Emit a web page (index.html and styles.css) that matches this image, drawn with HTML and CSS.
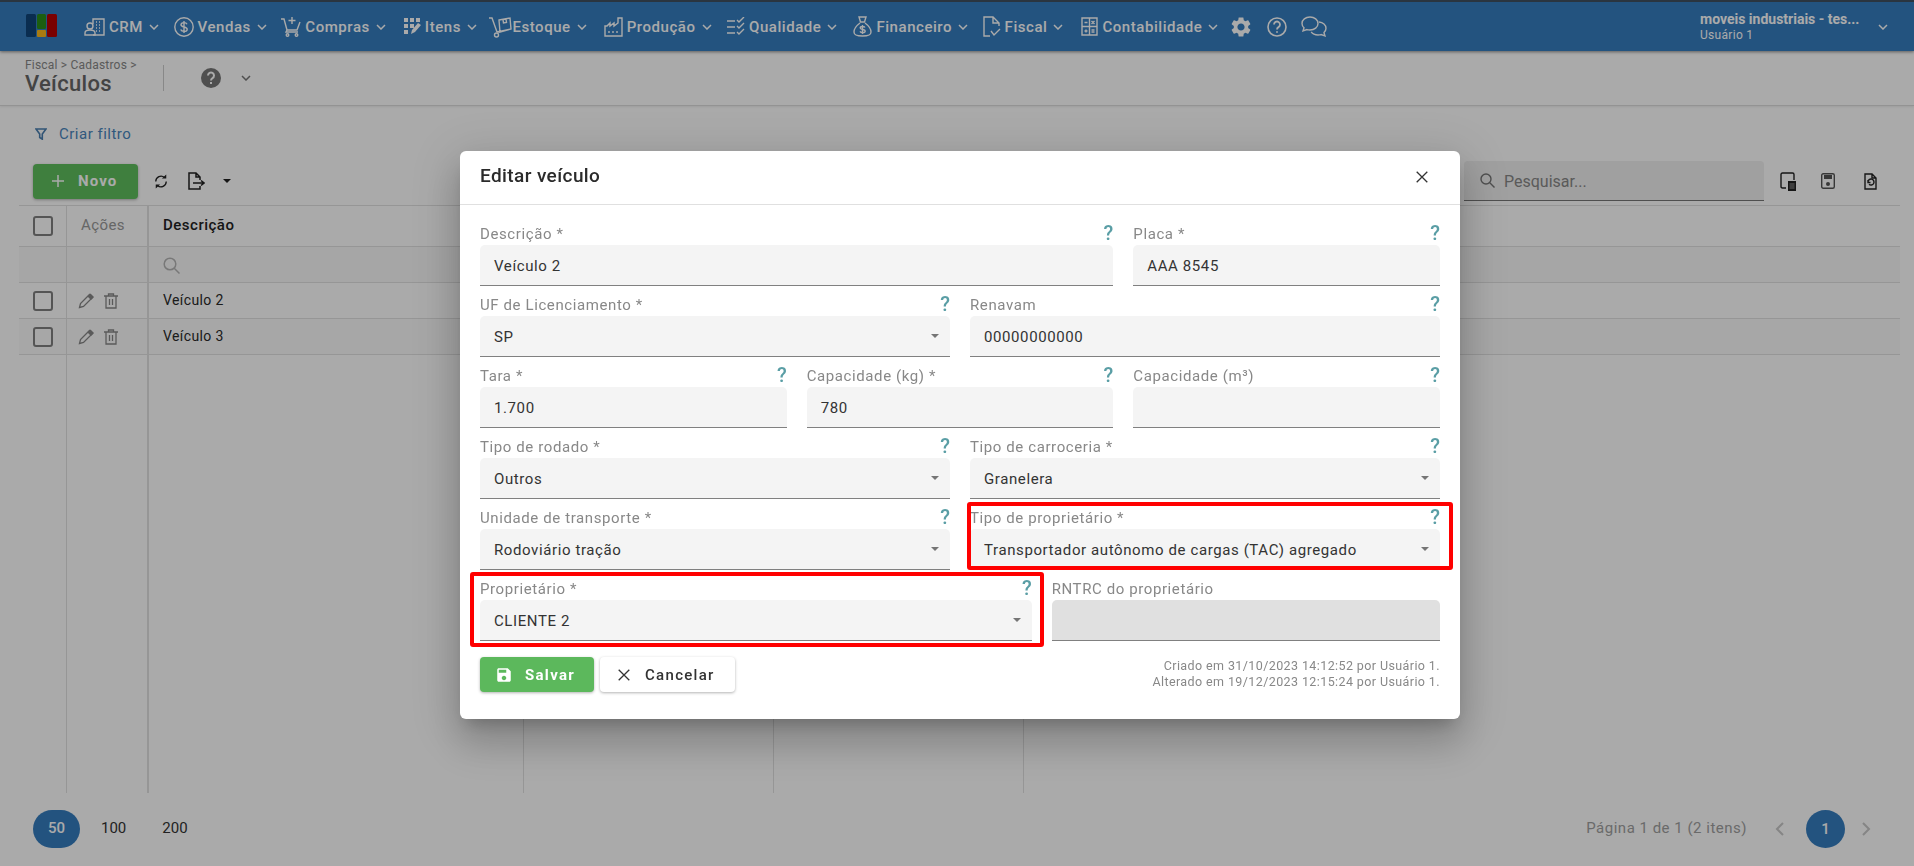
FILE: index.html
```html
<!DOCTYPE html>
<html lang="pt-BR">
<head>
<meta charset="utf-8">
<title>Veículos</title>
<link rel="stylesheet" href="styles.css">
</head>
<body>
<div class="page">
  <header class="topbar">
    <svg class="logo" width="31" height="23" viewBox="0 0 31 23"><rect width="10" height="23" rx="1.5" fill="#104478"/><rect x="11" width="9" height="15" rx="1.5" fill="#2a8d18"/><rect x="11" y="16" width="9" height="7" rx="1" fill="#fcb718"/><rect x="21" width="10" height="23" rx="1.5" fill="#b80000"/></svg>
    <nav class="nav">
      <a class="nav-item"><svg width="21" height="20" viewBox="0 0 21 20" class="ico"><path d="M9 7V2h11v16H9M12 5h1M15 5h1M12 8h1M15 8h1M12 11h1M15 11h1M12 14h1M15 14h1"/><circle cx="6" cy="9" r="3"/><path d="M1 18v-2c0-2 2-3 5-3s5 1 5 3v2z"/></svg><span>CRM</span><svg class="chev" width="10" height="6" viewBox="0 0 10 6"><path d="M1 1l4 4 4-4"/></svg></a>
      <a class="nav-item"><svg width="20" height="20" viewBox="0 0 20 20" class="ico"><circle cx="10" cy="10" r="9.2"/><path d="M13 7.200C12.500 6 11.300 5.600 10 5.600c-1.700 0-3 .8-3 2.200 0 3 6.200 1.400 6.200 4.400 0 1.400-1.400 2.200-3.200 2.200-1.500 0-2.800-.6-3.300-1.900M10 4v12"/></svg><span>Vendas</span><svg class="chev" width="10" height="6" viewBox="0 0 10 6"><path d="M1 1l4 4 4-4"/></svg></a>
      <a class="nav-item nav-compras"><svg width="20" height="21" viewBox="0 0 20 21" class="ico"><path d="M0 3h3l3 11h10l3-8M6 14l-1 2h12M11 1v7M7.500 4.500h7"/><circle cx="6.500" cy="19" r="1.300"/><circle cx="15.500" cy="19" r="1.300"/></svg><span>Compras</span><svg class="chev" width="10" height="6" viewBox="0 0 10 6"><path d="M1 1l4 4 4-4"/></svg></a>
      <a class="nav-item nav-itens"><svg width="17" height="18" viewBox="0 0 17 18" class="ico-fill"><path d="M0 0h4v4H0zM6 0h4v4H6zM12 0h4v4h-4zM0 6h4v4H0zM6 6h4v4H6zM0 12h4v4H0zM7 16l1-4 6-7 3 2-6 7z"/></svg><span>Itens</span><svg class="chev" width="10" height="6" viewBox="0 0 10 6"><path d="M1 1l4 4 4-4"/></svg></a>
      <a class="nav-item nav-estoque"><svg width="23" height="22" viewBox="0 0 23 22" class="ico"><path d="M0 2h3l5 14M10 4l11-2 1 11-11 3zM14 3.500l.5 3.500 3-.5-.5-3.500M8 16l14-3"/><circle cx="7.500" cy="19" r="2"/></svg><span>Estoque</span><svg class="chev" width="10" height="6" viewBox="0 0 10 6"><path d="M1 1l4 4 4-4"/></svg></a>
      <a class="nav-item nav-producao"><svg width="19" height="20" viewBox="0 0 19 20" class="ico"><path d="M1 19V9h2l3-3v3l4-3v3l4-3V1h4v18zM5 14v2M9 14v2M13 14v2"/></svg><span>Produção</span><svg class="chev" width="10" height="6" viewBox="0 0 10 6"><path d="M1 1l4 4 4-4"/></svg></a>
      <a class="nav-item nav-qualidade"><svg width="18" height="19" viewBox="0 0 18 19" class="ico"><path d="M0 4h8M0 10h8M0 16h8M10 3l2 2 5-5M10 9l2 2 5-5M10 15l2 2 5-5"/></svg><span>Qualidade</span><svg class="chev" width="10" height="6" viewBox="0 0 10 6"><path d="M1 1l4 4 4-4"/></svg></a>
      <a class="nav-item"><svg width="19" height="21" viewBox="0 0 19 21" class="ico"><path d="M6 1h7l-1.500 5h-4zM7 6h5M7 7C3 10 1 13 1 16c0 3 2 4 8.500 4s8.500-1 8.500-4c0-3-2-6-6-9M12 11.500c-.5-.8-1.300-1-2.500-1-1.500 0-2.300.6-2.300 1.500 0 2 5 1 5 3 0 1-1 1.600-2.500 1.600-1.300 0-2.200-.4-2.700-1.200M9.500 9v9"/></svg><span>Financeiro</span><svg class="chev" width="10" height="6" viewBox="0 0 10 6"><path d="M1 1l4 4 4-4"/></svg></a>
      <a class="nav-item nav-fiscal"><svg width="18" height="21" viewBox="0 0 18 21" class="ico"><path d="M7 20H1V1h9l6 6v3M10 1v6h6M8 15l3 4 6-6"/></svg><span>Fiscal</span><svg class="chev" width="10" height="6" viewBox="0 0 10 6"><path d="M1 1l4 4 4-4"/></svg></a>
      <a class="nav-item nav-contab"><svg width="17" height="19" viewBox="0 0 17 19" class="ico"><path d="M1 1h15v17H1zM1 9.500h15M8.500 1v17M3.500 5.500h3M10.500 4l3 3M13.500 4l-3 3M3.500 14h3M5 12.500v3M10.500 13h3M10.500 15h3"/></svg><span>Contabilidade</span><svg class="chev" width="10" height="6" viewBox="0 0 10 6"><path d="M1 1l4 4 4-4"/></svg></a>
      <svg class="tool-gear" width="24" height="24" viewBox="0 0 24 24"><path d="M19.140 12.940c.04-.3.06-.61.06-.94 0-.32-.02-.64-.07-.94l2.030-1.580c.18-.14.23-.41.12-.61l-1.920-3.320c-.12-.22-.37-.29-.59-.22l-2.390.96c-.5-.38-1.030-.7-1.620-.94l-.36-2.540c-.04-.24-.24-.41-.48-.41h-3.840c-.24 0-.43.17-.47.41l-.36 2.540c-.59.24-1.130.57-1.620.94l-2.390-.96c-.22-.08-.47 0-.59.22L2.740 8.870c-.12.21-.08.47.12.61l2.030 1.580c-.05.3-.09.63-.09.94s.02.64.07.94l-2.030 1.580c-.18.14-.23.41-.12.61l1.920 3.320c.12.22.37.29.59.22l2.390-.96c.5.38 1.030.7 1.620.94l.36 2.540c.05.24.24.41.48.41h3.840c.24 0 .44-.17.47-.41l.36-2.540c.59-.24 1.130-.56 1.620-.94l2.390.96c.22.08.47 0 .59-.22l1.920-3.320c.12-.22.07-.47-.12-.61l-2.010-1.580zM12 15.600c-1.980 0-3.600-1.620-3.600-3.600s1.620-3.600 3.600-3.600 3.600 1.620 3.600 3.600-1.620 3.600-3.600 3.600z"/></svg>
      <svg class="tool-help ico" width="20" height="20" viewBox="0 0 20 20"><circle cx="10" cy="10" r="9"/><path d="M7 7.500a3 3 0 1 1 4.500 2.600c-1 .6-1.500 1.100-1.500 2.300M10 14.200v1.600" class="thick"/></svg>
      <svg class="tool-chat ico" width="26" height="22" viewBox="0 0 26 22"><path d="M9 1c4.500 0 8 2.800 8 6.500S13.500 14 9 14c-1 0-2-.1-3-.4L2 15l1-3.200C1.800 10.700 1 9.200 1 7.500 1 3.800 4.500 1 9 1z"/><path d="M18 6c4 .3 7 3 7 6.300 0 1.700-.8 3.200-2 4.300l1 3.400-4-1.400c-1 .3-2 .4-3 .4-3 0-5.500-1.200-6.800-3.100"/></svg>
    </nav>
    <div class="account">
      <div class="account-text"><strong>moveis industriais - tes...</strong><span>Usuário 1</span></div>
      <svg class="chev" width="10" height="6" viewBox="0 0 10 6"><path d="M1 1l4 4 4-4"/></svg>
    </div>
  </header>

  <section class="subbar">
    <div class="crumbs"><span class="crumb-path">Fiscal &gt; Cadastros &gt;</span><h1>Veículos</h1></div>
    <span class="subbar-rule"></span>
    <svg class="sub-help" width="20" height="20" viewBox="0 0 20 20"><circle cx="10" cy="10" r="10"/><path d="M7 7.500a3 3 0 1 1 4.500 2.600c-1 .6-1.500 1.100-1.500 2.300M10 14v2"/></svg>
    <svg class="sub-chev" width="10" height="6" viewBox="0 0 10 6"><path d="M1 1l4 4 4-4"/></svg>
  </section>

  <div class="filter-row">
    <svg width="12" height="12" viewBox="0 0 12 12"><path d="M1 1h10L7.300 6v5.200L4.700 9.500V6z"/></svg>
    <span>Criar filtro</span>
  </div>

  <div class="toolbar">
    <button class="btn-new"><svg width="14" height="14" viewBox="0 0 14 14"><path d="M7 1v12M1 7h12"/></svg><span>Novo</span></button>
    <svg class="tool-refresh" width="14" height="17" viewBox="0 0 16 18"><path d="M2 9a6 6 0 0 1 10-4.500M14 9a6 6 0 0 1-10 4.500"/><path class="solid" d="M9 5.500h5V1zM7 12.500H2V17z"/></svg>
    <svg class="tool-export" width="17" height="18" viewBox="0 0 17 18"><path d="M12 14v3H1V1h7l4 4v3M8 1v4h4M5 11h11M13 8.500l3 2.500-3 2.500"/></svg>
    <span class="caret caret-dark"></span>
    <div class="search">
      <svg width="15" height="15" viewBox="0 0 15 15"><circle cx="6" cy="6" r="5"/><path d="M9.800 9.800L14.500 14.500"/></svg>
      <span>Pesquisar...</span>
    </div>
    <div class="tool-end">
      <svg width="17" height="19" viewBox="0 0 17 19"><path d="M6 16H2.500Q1 16 1 14.500V2.500Q1 1 2.500 1h10Q14 1 14 2.500V8"/><path class="solid" d="M8 9h8v10H8z"/><path class="stripes" d="M9.500 12h5M9.500 14h5M9.500 16h5"/></svg>
      <svg class="muted" width="14" height="16" viewBox="0 0 14 16"><rect x=".7" y=".7" width="12.600" height="14.600" rx="1.500"/><path class="solid" d="M3 2h8v4H3z"/><circle class="solid" cx="7" cy="11" r="2"/></svg>
      <svg class="tool-last" width="13" height="17" viewBox="0 0 13 17"><path d="M1 1h7l4 4v11H1zM8 1v4h4"/><path d="M4 9a3 3 0 1 1 1 2.300M4 7v2.500h2.500"/></svg>
    </div>
  </div>

  <div class="table">
    <div class="tr th">
      <div class="td td-check"><span class="checkbox"></span></div>
      <div class="td td-actions">Ações</div>
      <div class="td td-name">Descrição</div>
      <div class="td"></div><div class="td"></div><div class="td td-last"></div>
    </div>
    <div class="tr tr-filter">
      <div class="td"></div>
      <div class="td td-actions"></div>
      <div class="td td-name"><svg class="filter-search" width="17" height="17" viewBox="0 0 17 17"><circle cx="7" cy="7" r="5.800"/><path d="M11 11l5.500 5.500"/></svg></div>
      <div class="td"></div><div class="td"></div><div class="td td-last"></div>
    </div>
    <div class="tr tr-body">
      <div class="td td-check"><span class="checkbox"></span></div>
      <div class="td td-icons">
        <svg class="row-edit" width="16" height="16" viewBox="0 0 16 16"><path d="M1.500 14.500l1-4L11.500 1.500l3 3-9 9z"/><path class="solid" d="M9.500 3.500l3-3 3.500 3.500-3 3z"/></svg>
        <svg class="row-del" width="14" height="16" viewBox="0 0 14 16"><path d="M0 3h14M4.500 3V1h5v2M2 3v12h10V3M5.500 6v6M8.500 6v6"/></svg>
      </div>
      <div class="td td-name">Veículo 2</div>
      <div class="td"></div><div class="td"></div><div class="td td-last"></div>
    </div>
    <div class="tr tr-body tr-alt">
      <div class="td td-check"><span class="checkbox"></span></div>
      <div class="td td-icons">
        <svg class="row-edit" width="16" height="16" viewBox="0 0 16 16"><path d="M1.500 14.500l1-4L11.500 1.500l3 3-9 9z"/><path class="solid" d="M9.500 3.500l3-3 3.500 3.500-3 3z"/></svg>
        <svg class="row-del" width="14" height="16" viewBox="0 0 14 16"><path d="M0 3h14M4.500 3V1h5v2M2 3v12h10V3M5.500 6v6M8.500 6v6"/></svg>
      </div>
      <div class="td td-name">Veículo 3</div>
      <div class="td"></div><div class="td"></div><div class="td td-last"></div>
    </div>
    <div class="tr tr-fill">
      <div class="td"></div>
      <div class="td td-actions"></div>
      <div class="td td-name"></div>
      <div class="td"></div><div class="td"></div><div class="td td-last"></div>
    </div>
  </div>

  <footer class="pager">
    <div class="sizes"><span class="size size-on">50</span><span class="size">100</span><span class="size size-far">200</span></div>
    <div class="pages">
      <span class="page-info">Página 1 de 1 (2 itens)</span>
      <svg class="pg-arrow" width="9" height="14" viewBox="0 0 9 14"><path d="M8 1L2 7l6 6"/></svg>
      <span class="page-num">1</span>
      <svg class="pg-arrow" width="9" height="14" viewBox="0 0 9 14"><path d="M1 1l6 6-6 6"/></svg>
    </div>
  </footer>
</div>

<div class="backdrop"></div>

<div class="modal">
  <div class="modal-head">
    <h2>Editar veículo</h2>
    <svg width="12" height="12" viewBox="0 0 12 12"><path d="M.7.7l10.600 10.600M11.300.7L.7 11.300"/></svg>
  </div>
  <div class="modal-body">
    <div class="field span-8"><div class="lab"><span>Descrição *</span><b>?</b></div><div class="box">Veículo 2</div></div>
    <div class="field span-4"><div class="lab"><span>Placa *</span><b>?</b></div><div class="box">AAA 8545</div></div>

    <div class="field span-6"><div class="lab"><span>UF de Licenciamento *</span><b>?</b></div><div class="box select">SP<i class="caret"></i></div></div>
    <div class="field span-6"><div class="lab"><span>Renavam</span><b>?</b></div><div class="box">00000000000</div></div>

    <div class="field span-4"><div class="lab"><span>Tara *</span><b>?</b></div><div class="box">1.700</div></div>
    <div class="field span-4"><div class="lab"><span>Capacidade (kg) *</span><b>?</b></div><div class="box">780</div></div>
    <div class="field span-4"><div class="lab"><span>Capacidade (m³)</span><b>?</b></div><div class="box"></div></div>

    <div class="field span-6"><div class="lab"><span>Tipo de rodado *</span><b>?</b></div><div class="box select">Outros<i class="caret"></i></div></div>
    <div class="field span-6"><div class="lab"><span>Tipo de carroceria *</span><b>?</b></div><div class="box select">Granelera<i class="caret"></i></div></div>

    <div class="field span-6"><div class="lab"><span>Unidade de transporte *</span><b>?</b></div><div class="box select">Rodoviário tração<i class="caret"></i></div></div>
    <div class="field span-6 mark-type"><div class="lab"><span>Tipo de proprietário *</span><b>?</b></div><div class="box select">Transportador autônomo de cargas (TAC) agregado<i class="caret"></i></div></div>

    <div class="field span-7 mark-owner"><div class="lab"><span>Proprietário *</span><b>?</b></div><div class="box select">CLIENTE 2<i class="caret"></i></div></div>
    <div class="field span-5"><div class="lab"><span>RNTRC do proprietário</span></div><div class="box box-off"></div></div>
  </div>
  <div class="modal-foot">
    <button class="btn-save"><svg width="18" height="18" viewBox="0 0 24 24"><path d="M17 3H5c-1.110 0-2 .9-2 2v14c0 1.100.89 2 2 2h14c1.100 0 2-.9 2-2V7l-4-4zm-5 16c-1.660 0-3-1.340-3-3s1.340-3 3-3 3 1.340 3 3-1.340 3-3 3zm3-10H5V5h10v4z"/></svg><span>Salvar</span></button>
    <button class="btn-cancel"><svg width="12" height="12" viewBox="0 0 12 12"><path d="M.7.7l10.600 10.600M11.300.7L.7 11.300"/></svg><span>Cancelar</span></button>
    <div class="audit"><span>Criado em 31/10/2023 14:12:52 por Usuário 1.</span><span>Alterado em 19/12/2023 12:15:24 por Usuário 1.</span></div>
  </div>
</div>
</body>
</html>
```

FILE: styles.css
```css
* { box-sizing: border-box; }
html, body { margin: 0; height: 866px; overflow: hidden; }
body { font-family: Roboto, "Liberation Sans", sans-serif; color: #333; background: #fff; letter-spacing: .5px; }
svg { flex: none; display: block; }
h1, h2 { margin: 0; font-weight: 400; }
button { font-family: inherit; border: 0; padding: 0; }

.page { height: 866px; display: flex; flex-direction: column; }

/* top bar */
.topbar { height: 51px; flex: none; display: flex; align-items: center; background: #357dbf; border-top: 2px solid #3f5060; color: #fff; box-shadow: 0 1px 3px rgba(0,0,0,.45); position: relative; padding-left: 26px; }
.logo { margin-right: 27px; margin-top: -2px; }
.nav { display: flex; align-items: center; }
.nav-item { display: flex; align-items: center; font-size: 15px; font-weight: 500; letter-spacing: .55px; margin-right: 14.5px; }
.nav-item span { margin: 0 6px 0 4px; }
.nav-compras { margin-right: 18px; }
.nav-itens { margin-right: 12.500px; }
.nav-estoque { margin-right: 17px; }
.nav-estoque span { margin-left: 0; }
.nav-producao { margin-right: 15.500px; }
.nav-qualidade { margin-right: 16px; }
.nav-fiscal { margin-right: 18px; }
.nav-contab { margin-right: 11px; }
.ico { fill: none; stroke: #fff; stroke-width: 1.400; }
.ico-fill { fill: #fff; }
.chev { fill: none; stroke: #fff; stroke-width: 1.500; }
.tool-gear { fill: #fff; margin-right: 13.500px; }
.tool-help { stroke-width: 1.600; margin-right: 14px; }
.thick { stroke-width: 1.800; }
.account { margin-left: auto; display: flex; align-items: center; gap: 9px; padding-right: 26px; }
.account-text { display: flex; flex-direction: column; width: 169px; line-height: 15px; letter-spacing: 0; }
.account-text strong { font-size: 14px; font-weight: 700; line-height: 18px; }
.account-text span { font-size: 12px; letter-spacing: .3px; }

/* sub bar */
.subbar { height: 55px; flex: none; display: flex; align-items: center; padding-left: 25px; border-bottom: 1px solid #ddd; box-shadow: 0 1px 2px rgba(0,0,0,.08); }
.crumbs { width: 138px; display: flex; flex-direction: column; }
.crumb-path { font-size: 12px; line-height: 12px; color: #888; letter-spacing: .2px; margin-top: -1px; }
.crumbs h1 { font-size: 22px; line-height: 26px; color: #666; font-weight: 500; letter-spacing: .3px; }
.subbar-rule { width: 1px; height: 26px; background: #ccc; }
.sub-help { margin-left: 37px; }
.sub-help circle { fill: #777; }
.sub-help path { fill: none; stroke: #fff; stroke-width: 2; }
.sub-chev { margin-left: 20px; fill: none; stroke: #777; stroke-width: 1.500; }

/* filter */
.filter-row { height: 51px; flex: none; display: flex; align-items: center; padding: 5px 0 0 35px; gap: 12px; font-size: 15px; color: #4a86bd; }
.filter-row path { fill: none; stroke: #4a7fb0; stroke-width: 1.600; }

/* toolbar */
.toolbar { height: 48px; flex: none; display: flex; align-items: center; padding-left: 33px; }
.btn-new { width: 105px; height: 35px; background: #5fbf5e; border-radius: 4px; color: #fff; font-size: 15px; font-weight: 700; letter-spacing: 1.1px; display: flex; align-items: center; gap: 13px; padding-left: 18px; box-shadow: 0 1px 3px rgba(0,0,0,.3); }
.btn-new path { fill: none; stroke: #fff; stroke-width: 1.500; }
.tool-refresh { margin-left: 16px; fill: none; stroke: #222; stroke-width: 1.500; }
.tool-refresh .solid { fill: #222; stroke: none; }
.tool-export { margin-left: 20px; fill: none; stroke: #222; stroke-width: 1.500; }
.caret { display: block; width: 0; height: 0; border-left: 4px solid transparent; border-right: 4px solid transparent; border-top: 4.500px solid #757575; }
.caret-dark { margin-left: 18px; border-top-color: #222; border-top-width: 4px; }
.search { margin-left: auto; width: 300px; height: 40px; background: #f0f0f0; border-radius: 4px 4px 0 0; border-bottom: 1px solid #777; display: flex; align-items: center; padding: 2px 0 0 16px; gap: 9px; font-size: 16px; color: #888; letter-spacing: 0; }
.search svg { fill: none; stroke: #777; stroke-width: 1.400; margin-top: -2px; }
.tool-end { display: flex; align-items: center; margin-left: 16px; margin-right: 37px; gap: 24px; }
.tool-end svg { fill: none; stroke: #222; stroke-width: 1.400; }
.tool-end .solid { fill: #222; stroke: none; }
.tool-end .stripes { stroke: #999; stroke-width: 1; }
.tool-end .muted { stroke: #555; }
.tool-end .muted .solid { fill: #555; }
.tool-end .tool-last { margin-left: 5px; }

/* table */
.table { flex: 1; margin: 0 14px 0 19px; display: flex; flex-direction: column; border-top: 1px solid #e2e2e2; font-size: 14px; }
.tr { display: grid; grid-template-columns: 48px 82px 375px 250px 250px 1fr; border-bottom: 1px solid #e2e2e2; }
.th { height: 41px; font-size: 15px; font-weight: 500; }
.tr-filter { height: 36px; background: #f9f9f9; }
.tr-body { height: 36px; }
.tr-alt { background: #fbfbfb; }
.tr-fill { flex: 1; border-bottom: 0; }
.td { border-right: 1px solid #e2e2e2; display: flex; align-items: center; min-width: 0; }
.td-last { border-right: 0; }
.td-check { justify-content: center; }
.td-actions { border-right-width: 2px; padding: 0 0 2px 14px; color: #999; font-weight: 400; font-size: 15px; letter-spacing: .4px; }
.td-name { padding: 0 0 2px 14px; color: #2a2a2a; font-size: 14px; letter-spacing: .4px; }
.th .td-name { color: #222; font-size: 15px; font-weight: 500; letter-spacing: .5px; }
.td-icons { border-right-width: 2px; padding-left: 11px; gap: 10px; }
.checkbox { width: 20px; height: 20px; border: 2px solid #808080; border-radius: 3px; display: block; }
.filter-search { fill: none; stroke: #b5b5b5; stroke-width: 1.500; margin-top: 3px; }
.row-edit, .row-del { fill: none; stroke: #888; stroke-width: 1.300; }
.row-edit .solid { fill: #888; stroke: none; }

/* pager */
.pager { height: 73px; flex: none; display: flex; align-items: flex-start; justify-content: space-between; padding: 17px 43px 0 33px; font-size: 15px; }
.sizes { display: flex; align-items: center; gap: 21px; height: 38px; letter-spacing: 0; }
.size { color: #333; margin-top: -2px; }
.size-far { margin-left: 15px; }
.size-on { width: 47px; height: 38px; margin-top: 0; border-radius: 19px; background: #357dbf; color: #fff; font-weight: 500; display: flex; align-items: center; justify-content: center; padding-bottom: 2px; }
.pages { display: flex; align-items: center; height: 38px; }
.page-info { color: #a0a0a0; margin-right: 28px; margin-top: -2px; }
.pg-arrow { fill: none; stroke: #c8c8c8; stroke-width: 2; }
.page-num { width: 39px; height: 38px; border-radius: 50%; background: #357dbf; color: #fff; font-weight: 500; letter-spacing: 0; display: flex; align-items: center; justify-content: center; margin: 0 17px 0 22px; }

/* modal */
.backdrop { position: fixed; inset: 0; background: rgba(0,0,0,.333); }
.modal { position: absolute; left: 460px; top: 151px; width: 1000px; height: 568px; background: #fff; border-radius: 6px; box-shadow: 0 11px 15px -7px rgba(0,0,0,.2), 0 24px 38px 3px rgba(0,0,0,.14), 0 9px 46px 8px rgba(0,0,0,.12); display: flex; flex-direction: column; }
.modal-head { height: 54px; flex: none; display: flex; align-items: center; justify-content: space-between; padding: 0 32px 1px 20px; border-bottom: 1px solid #e0e0e0; }
.modal-head h2 { font-size: 19px; font-weight: 500; color: #2b2b2b; line-height: 26px; margin-top: -2px; letter-spacing: .4px; }
.modal-head svg, .btn-cancel svg { fill: none; stroke: #333; stroke-width: 1.300; }
.modal-body { display: grid; grid-template-columns: repeat(12, 1fr); column-gap: 20px; padding: 10px 20px 0; letter-spacing: .6px; }
.field { position: relative; height: 71px; display: flex; flex-direction: column; }
.span-8 { grid-column: span 8; }
.span-7 { grid-column: span 7; }
.span-6 { grid-column: span 6; }
.span-5 { grid-column: span 5; }
.span-4 { grid-column: span 4; }
.lab { height: 30px; flex: none; display: flex; align-items: center; justify-content: space-between; font-size: 15px; color: #888; padding-top: 7px; }
.lab b { color: #5a9ea5; font-size: 20px; font-weight: 500; line-height: 18px; margin-top: -2px; letter-spacing: 0; }
.box { height: 41px; background: #f4f4f4; border-radius: 5px 5px 0 0; border-bottom: 1px solid #808080; display: flex; align-items: center; padding: 2px 14px 0; font-size: 15px; color: #333; position: relative; }
.select { justify-content: space-between; }
.select .caret { margin-right: -3px; margin-top: -2px; }
.box-off { background: #e0e0e0; }
.mark-type::after, .mark-owner::after { content: ""; position: absolute; border: 4px solid #f00; border-radius: 3px; pointer-events: none; }
.mark-type::after { left: -3px; right: -13px; top: 3px; bottom: 0; }
.mark-owner::after { left: -10px; right: -12px; top: 2px; bottom: -6px; }
.modal-foot { display: flex; align-items: flex-start; padding: 16px 20px 0; }
.btn-save { width: 114px; height: 35px; background: #5cb85c; color: #fff; border-radius: 4px; display: flex; align-items: center; gap: 12px; padding-left: 15px; font-size: 15px; font-weight: 700; letter-spacing: 1.3px; box-shadow: 0 1px 3px rgba(0,0,0,.3); }
.btn-save svg { fill: #fff; }
.btn-cancel { width: 135px; height: 35px; margin-left: 6px; background: #fff; color: #333; border-radius: 4px; display: flex; align-items: center; gap: 15px; padding-left: 18px; font-size: 15px; font-weight: 500; letter-spacing: 1.3px; box-shadow: 0 1px 3px rgba(0,0,0,.3); }
.audit { margin-left: auto; display: flex; flex-direction: column; align-items: flex-end; font-size: 12.500px; line-height: 16px; color: #888; padding-top: 1px; letter-spacing: .4px; }
```
